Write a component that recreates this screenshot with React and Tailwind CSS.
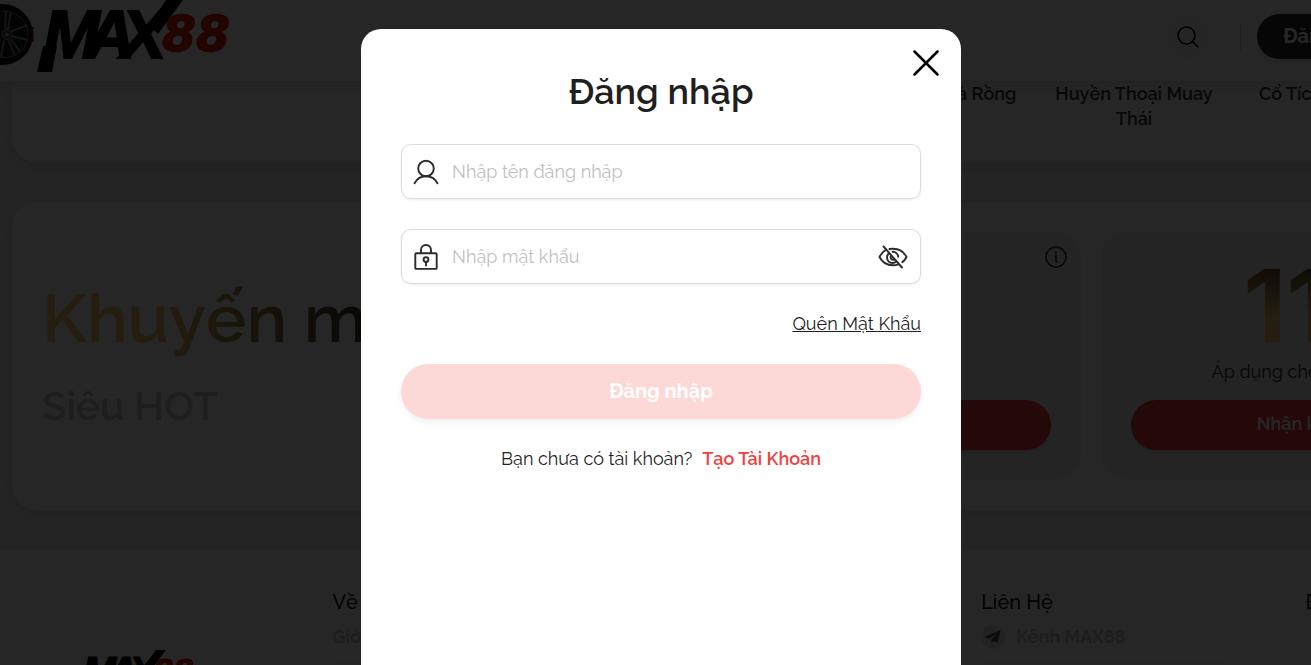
import { useState } from 'react';

const games = ['Vua Cà Rồng', 'Huyền Thoại Muay Thái', 'Cổ Tích Mơ'];

const promotions = [
  { value: '100', note: 'Áp dụng cho thành viên' },
  { value: '116', note: 'Áp dụng cho sản phẩm Slots' },
];

const Logo = ({ className, withWheel }) => (
  <svg viewBox="0 0 232 74" className={className} role="img" aria-label="MAX88">
    {withWheel && (
      <g>
        <ellipse cx="2" cy="34.5" rx="31" ry="30.5" fill="#0c0c0c" />
        <path d="M32 27v15" stroke="#7a150c" strokeWidth="3" />
        <circle cx="5" cy="34.5" r="23" fill="#151515" stroke="#777" strokeWidth="1" />
        <g stroke="#858585" strokeWidth="2" fill="none">
          <path d="M10 32l17-7M11 36l17 4M8 29l3-17M5 29l1-19M11 39l9 13M8 40l7 15M4 40L1 57M0 38l-5 14" />
        </g>
        <circle cx="7" cy="34.5" r="5" fill="#444" stroke="#999" />
        <circle cx="7" cy="34.5" r="2" fill="#aaa" />
      </g>
    )}
    <text
      x="162"
      y="51"
      fontSize="49"
      fontWeight="700"
      fontStyle="italic"
      fontFamily="'DejaVu Sans', sans-serif"
      fill="#e01b0c"
      stroke="#e01b0c"
      strokeWidth="1.5"
    >
      88
    </text>
    <text
      x="43 86 121"
      y="58"
      fontSize="68"
      fontWeight="700"
      fontStyle="italic"
      fontFamily="'Liberation Sans', sans-serif"
      fill="#000"
      stroke="#000"
      strokeWidth="2"
    >
      MAX
    </text>
    {/* tail under the M and the long slash over the X */}
    <path d="M43 46h14l-5 26H37z" fill="#000" />
    <path d="M166 0h17l-25 34-9-9z" fill="#000" />
  </svg>
);

const SearchIcon = () => (
  <svg viewBox="0 0 22 22" className="size-[22px]" fill="none" stroke="currentColor" strokeWidth="1.6">
    <circle cx="9.5" cy="9.5" r="8.5" />
    <path d="M15.5 15.5l5.5 5.5" strokeLinecap="round" />
  </svg>
);

const InfoIcon = () => (
  <svg viewBox="0 0 22 22" className="size-[22px]" fill="none" stroke="currentColor" strokeWidth="1.5">
    <circle cx="11" cy="11" r="10" />
    <path d="M9.5 9.8h1.5v5.2q0 1 1 1h.8" />
    <circle cx="10.7" cy="6.3" r="1.1" fill="currentColor" stroke="none" />
  </svg>
);

const UserIcon = () => (
  <svg viewBox="0 0 26 26" className="size-[26px]" fill="none" stroke="currentColor" strokeWidth="1.9">
    <circle cx="13" cy="9.5" r="7.8" />
    <path d="M1.5 24.2C4 19.8 8.2 17.3 13 17.3s9 2.5 11.5 6.9" strokeLinecap="round" />
  </svg>
);

const LockIcon = () => (
  <svg viewBox="0 0 26 26" className="size-[26px]" fill="none" stroke="currentColor" strokeWidth="1.9">
    <rect x="2.3" y="9.3" width="21.4" height="15.6" rx="1" />
    <path d="M8 9V6c0-2.8 2-5 5-5s5 2.2 5 5v3" />
    <circle cx="13" cy="15.6" r="2.4" />
    <path d="M13 18v3.5" strokeLinecap="round" />
  </svg>
);

const EyeOffIcon = () => (
  <svg viewBox="0 0 30 24" className="h-6 w-[30px]" fill="none" stroke="currentColor" strokeWidth="1.9" strokeLinecap="round">
    <path d="M7.2 5.2C4.8 6.8 2.9 9 1.5 12c2.7 5.3 7.3 8.3 13.5 8.3 2 0 3.8-.3 5.4-.9" />
    <path d="M11.5 4c1.1-.2 2.3-.3 3.5-.3 6.2 0 10.8 3 13.5 8.3-1 2.1-2.4 3.8-4.2 5.2" />
    <path d="M10.7 8.5a5.5 5.5 0 0 0 7.7 8" />
    <path d="M14.5 6.8a5.3 5.3 0 0 1 5.7 5" />
    <path d="M12.7 11.2a2.6 2.6 0 0 0 3.4 3.3" />
    <path d="M5.5 1.5l18.5 21" />
  </svg>
);

const CloseIcon = () => (
  <svg viewBox="0 0 26 26" className="size-[26px]" fill="none" stroke="currentColor" strokeWidth="2.5" strokeLinecap="round">
    <path d="M1.5 1.5l23 23M24.5 1.5l-23 23" />
  </svg>
);

const Header = () => (
  <header className="relative z-10 flex h-[81px] items-start justify-between bg-white pr-[37px] shadow-[0_4px_16px_rgba(0,0,0,0.12)]">
    <Logo className="h-[74px] w-[232px]" withWheel />
    <div className="flex items-center gap-4 pt-[14px]">
      <button type="button" aria-label="Tìm kiếm" className="flex size-11 items-center justify-center rounded-full bg-[#f6f6f6]">
        <SearchIcon />
      </button>
      <span className="ml-[14px] h-[30px] w-px bg-[#d8d8d8]" />
      <button type="button" className="h-[45px] w-[156px] rounded-full bg-[#2b2b2b] pb-0.5 text-xl font-bold text-white shadow-md">
        Đăng nhập
      </button>
      <button type="button" className="h-[45px] w-[156px] rounded-full bg-[#f93c3c] pb-0.5 text-xl font-bold text-white shadow-md">
        Đăng ký
      </button>
    </div>
  </header>
);

const GameStrip = () => (
  <section className="mx-3 flex h-[81px] justify-end rounded-b-3xl bg-white pr-[218px] shadow-[0_4px_16px_rgba(60,70,80,0.15)]">
    {games.map((game) => (
      <p key={game} className="w-[172px] px-1 text-center text-lg leading-[25px] font-semibold text-[#333]">
        {game}
      </p>
    ))}
  </section>
);

const PromoCard = ({ value, note }) => (
  <article className="relative flex h-[247px] w-[460px] flex-col items-center rounded-3xl bg-[#f2f2f2] px-[30px] pt-6">
    <button type="button" aria-label="Chi tiết" className="absolute top-[14px] right-[14px] text-[#222]">
      <InfoIcon />
    </button>
    <strong className="bg-linear-to-t from-[#f5c060] from-40% to-[#4a3a1c] bg-clip-text font-[Inter] text-[100px] leading-[100px] font-bold text-transparent">
      {value}
      <span className="text-2xl">%</span>
    </strong>
    <p className="mt-1 text-lg leading-6 text-[#222]">{note}</p>
    <button type="button" className="mt-4 h-[50px] w-full rounded-full bg-[#f93c3c] pb-0.5 text-lg font-semibold text-white shadow-md">
      Nhận khuyến mãi
    </button>
  </article>
);

const Promotions = () => (
  <section className="mx-3 mt-10 flex h-[308px] justify-between rounded-3xl bg-white pt-[30px] pr-[49px] pl-[30px] shadow-[0_4px_16px_rgba(60,70,80,0.15)]">
    <div className="pt-11">
      <h2 className="bg-linear-to-r from-[#f5c060] from-30% to-[#1a1a1a] bg-clip-text text-[68px] leading-[84px] font-semibold text-transparent">
        Khuyến mãi
      </h2>
      <p className="mt-5 text-[40px] leading-[52px] font-semibold text-[#c8c8c8]">Siêu HOT</p>
    </div>
    <div className="flex gap-5">
      {promotions.map((promo) => (
        <PromoCard key={promo.value} {...promo} />
      ))}
    </div>
  </section>
);

const FooterColumn = ({ title, children }) => (
  <div className="px-2 pt-[38px]">
    <h3 className="text-xl leading-7 font-medium text-[#111]">{title}</h3>
    <div className="mt-2 mr-16 border-b border-[#ececec] pb-3 text-lg leading-[26px] font-bold text-[#c4c4c4]">{children}</div>
  </div>
);

const Footer = () => (
  <footer className="mt-10 grid grid-cols-5 bg-white pb-10">
    <div className="pt-[100px] pl-[57px]">
      <Logo className="h-11 w-[138px]" />
    </div>
    <FooterColumn title="Về MAX88">
      <a href="#gioi-thieu">Giới thiệu</a>
    </FooterColumn>
    <FooterColumn title="Sản Phẩm">
      <a href="#the-thao">Thể thao</a>
    </FooterColumn>
    <FooterColumn title="Liên Hệ">
      <a href="#kenh" className="flex items-center gap-[11px]">
        <span className="flex size-6 items-center justify-center rounded-full bg-[#e0e0e0] text-[#555]">
          <svg viewBox="0 0 16 14" className="h-[14px] w-4" fill="currentColor">
            <path d="M15.5 0L0 7l4.5 1.7L12 3 6.5 9.4v4l2.4-2.6 3.7 2.2z" />
          </svg>
        </span>
        Kênh MAX88
      </a>
    </FooterColumn>
    <div className="px-2 pt-[38px]">
      <h3 className="text-xl leading-7 font-medium text-[#111]">Đối Tác</h3>
    </div>
  </footer>
);

const fieldClass =
  'flex h-[55px] items-center gap-[13px] rounded-[10px] border border-[#dcdcdc] pr-3 pl-[11px] text-[#2b2b2b] shadow-[0_1px_3px_rgba(0,0,0,0.08)]';
const inputClass = 'min-w-0 flex-1 bg-transparent text-lg outline-none placeholder:text-[#bfbfbf]';

const LoginModal = ({ onClose }) => {
  const [username, setUsername] = useState('');
  const [password, setPassword] = useState('');
  const [showPassword, setShowPassword] = useState(false);

  return (
    <div className="fixed inset-0 z-50 flex justify-center bg-black/85 pt-[29px] pl-[11px]">
      <div
        role="dialog"
        aria-modal="true"
        aria-labelledby="login-title"
        className="relative w-full max-w-[600px] rounded-t-[20px] bg-white px-10 pt-10 text-[#1f1f1f]"
      >
        <button type="button" aria-label="Đóng" onClick={onClose} className="absolute top-[21px] right-[22px] text-black">
          <CloseIcon />
        </button>
        <h1 id="login-title" className="text-center text-4xl leading-[44px] font-semibold">
          Đăng nhập
        </h1>
        <form onSubmit={(event) => event.preventDefault()} className="mt-[31px]">
          <label className={fieldClass}>
            <UserIcon />
            <input
              type="text"
              aria-label="Tên đăng nhập"
              placeholder="Nhập tên đăng nhập"
              className={inputClass}
              value={username}
              onChange={(event) => setUsername(event.target.value)}
            />
          </label>
          <div className={`mt-[30px] ${fieldClass}`}>
            <LockIcon />
            <input
              type={showPassword ? 'text' : 'password'}
              aria-label="Mật khẩu"
              placeholder="Nhập mật khẩu"
              className={inputClass}
              value={password}
              onChange={(event) => setPassword(event.target.value)}
            />
            <button type="button" aria-label="Hiện mật khẩu" onClick={() => setShowPassword(!showPassword)}>
              <EyeOffIcon />
            </button>
          </div>
          <div className="mt-7 text-right text-lg leading-6">
            <a href="#quen-mat-khau" className="underline">
              Quên Mật Khẩu
            </a>
          </div>
          <button
            type="submit"
            disabled={!username || !password}
            className="mt-7 h-[55px] w-full rounded-full bg-[#f04438] pb-0.5 text-xl font-bold text-white shadow-md disabled:bg-[#fcd8d7] disabled:shadow-[0_3px_6px_rgba(0,0,0,0.06)]"
          >
            Đăng nhập
          </button>
        </form>
        <p className="mt-7 flex justify-center gap-[10px] text-lg leading-6">
          Bạn chưa có tài khoản?
          <a href="#dang-ky" className="font-semibold text-[#f04040]">
            Tạo Tài Khoản
          </a>
        </p>
      </div>
    </div>
  );
};

const App = () => {
  const [isLoginOpen, setIsLoginOpen] = useState(true);

  return (
    <div className="h-screen overflow-hidden bg-[#f2f2f2] font-['Raleway','Lato',sans-serif] lining-nums">
      <div className="min-w-[1622px]">
        <Header />
        <GameStrip />
        <Promotions />
        <Footer />
      </div>
      {isLoginOpen && <LoginModal onClose={() => setIsLoginOpen(false)} />}
    </div>
  );
};

export default App;
